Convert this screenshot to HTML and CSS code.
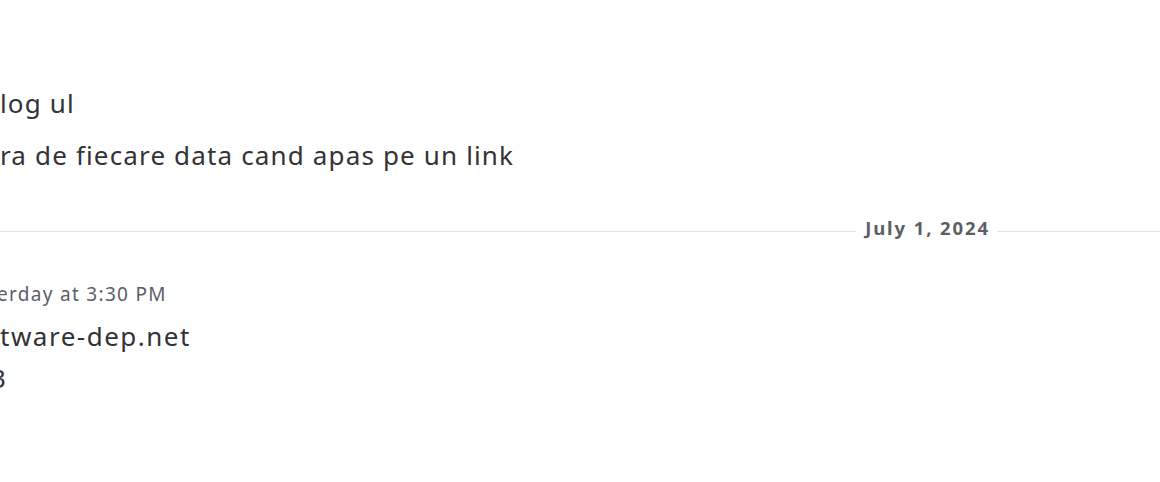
FILE: index.html
```html
<!DOCTYPE html>
<html lang="ro">
<head>
<meta charset="utf-8">
<title>Chat</title>
<link rel="stylesheet" href="styles.css">
</head>
<body>
<main class="chat">
  <div class="msg-group">
    <p class="msg-line first">log ul</p>
    <p class="msg-line second">ra de fiecare data cand apas pe un link</p>
  </div>
  <div class="divider">
    <span class="rule rule-left"></span>
    <span class="divider-text">July 1, 2024</span>
    <span class="rule rule-right"></span>
  </div>
  <div class="msg-group">
    <div class="timestamp">erday at 3:30 PM</div>
    <p class="msg-line link-line">tware-dep.net</p>
    <p class="msg-line cut-line">3</p>
  </div>
</main>
</body>
</html>
```

FILE: styles.css
```css
html, body {
  margin: 0;
  background: #ffffff;
}
body {
  font-family: "Noto Sans", "Open Sans", sans-serif;
  color: #313338;
}
.chat {
  width: 1160px;
  height: 482px;
  overflow: hidden;
  padding-top: 85px;
  box-sizing: border-box;
}
.msg-group {
  display: flex;
  flex-direction: column;
}
.msg-line {
  margin: 0;
  font-size: 26px;
  line-height: 36px;
  letter-spacing: 1.15px;
  white-space: nowrap;
}
.msg-line.first {
  margin-left: 0;
}
.msg-line.second {
  margin-top: 16px;
}
.divider {
  display: flex;
  align-items: center;
  gap: 9px;
  margin-top: 42px;
  height: 32px;
}
.rule {
  height: 1px;
  background: #e1e2e4;
}
.rule-left {
  flex: 1;
}
.rule-right {
  width: 163px;
}
.divider-text {
  align-self: flex-start;
  margin-top: 1px;
  font-size: 18.5px;
  font-weight: 700;
  letter-spacing: 1.9px;
  color: #5c5e66;
  line-height: 24px;
  margin-right: -2px;
}
.timestamp {
  margin-top: 34px;
  margin-left: -3px;
  font-size: 19px;
  line-height: 26px;
  letter-spacing: 1.3px;
  color: #5c5e66;
  white-space: nowrap;
}
.msg-line.link-line {
  margin-top: 11px;
  letter-spacing: 1.5px;
}
.msg-line.cut-line {
  margin-top: 6px;
  margin-left: -9px;
}
```
